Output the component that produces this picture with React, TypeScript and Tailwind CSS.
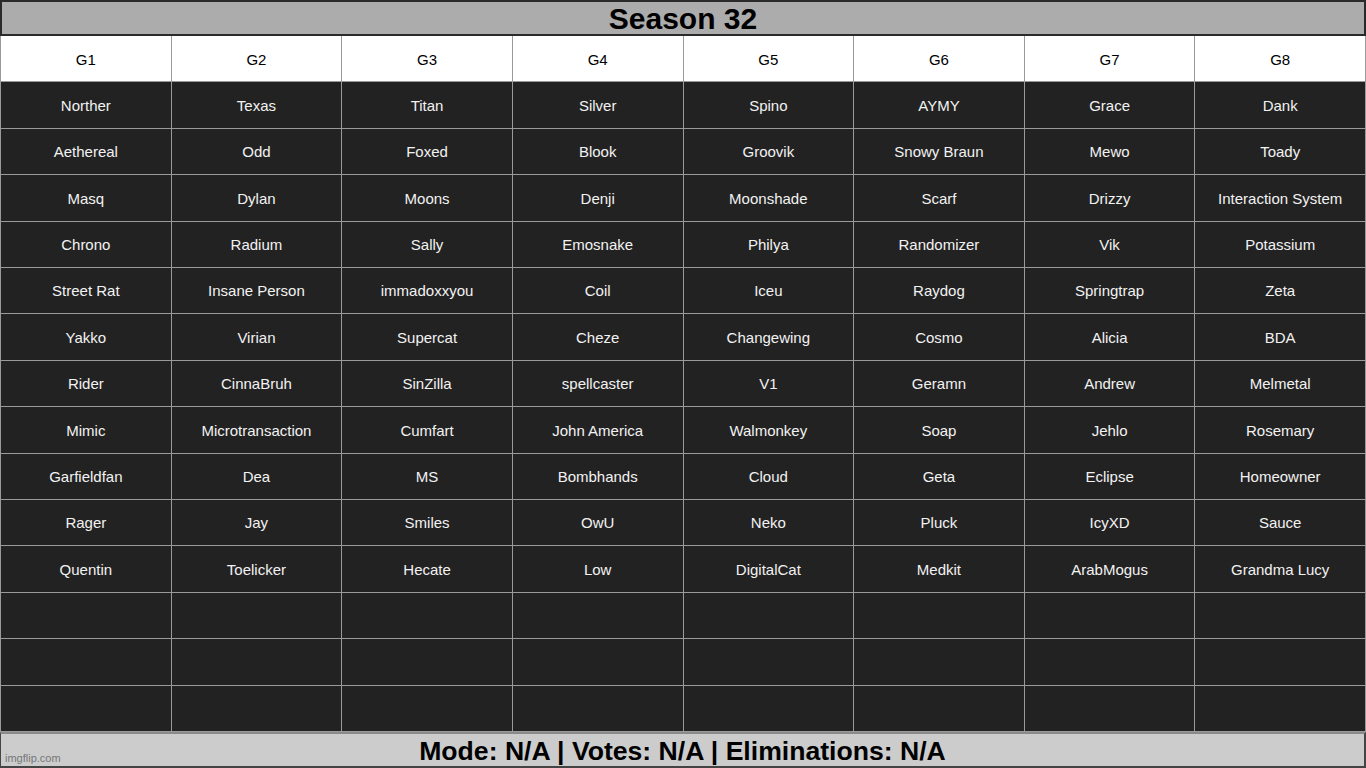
const columns: string[][] = [
  ['Norther', 'Aethereal', 'Masq', 'Chrono', 'Street Rat', 'Yakko', 'Rider', 'Mimic', 'Garfieldfan', 'Rager', 'Quentin'],
  ['Texas', 'Odd', 'Dylan', 'Radium', 'Insane Person', 'Virian', 'CinnaBruh', 'Microtransaction', 'Dea', 'Jay', 'Toelicker'],
  ['Titan', 'Foxed', 'Moons', 'Sally', 'immadoxxyou', 'Supercat', 'SinZilla', 'Cumfart', 'MS', 'Smiles', 'Hecate'],
  ['Silver', 'Blook', 'Denji', 'Emosnake', 'Coil', 'Cheze', 'spellcaster', 'John America', 'Bombhands', 'OwU', 'Low'],
  ['Spino', 'Groovik', 'Moonshade', 'Philya', 'Iceu', 'Changewing', 'V1', 'Walmonkey', 'Cloud', 'Neko', 'DigitalCat'],
  ['AYMY', 'Snowy Braun', 'Scarf', 'Randomizer', 'Raydog', 'Cosmo', 'Geramn', 'Soap', 'Geta', 'Pluck', 'Medkit'],
  ['Grace', 'Mewo', 'Drizzy', 'Vik', 'Springtrap', 'Alicia', 'Andrew', 'Jehlo', 'Eclipse', 'IcyXD', 'ArabMogus'],
  ['Dank', 'Toady', 'Interaction System', 'Potassium', 'Zeta', 'BDA', 'Melmetal', 'Rosemary', 'Homeowner', 'Sauce', 'Grandma Lucy'],
];

const ROWS = 14;

export default function App() {
  const rows: string[][] = [];
  for (let r = 0; r < ROWS; r++) {
    rows.push(columns.map((col) => col[r] ?? ''));
  }

  return (
    <div className="flex h-[768px] w-[1366px] flex-col overflow-hidden bg-[#222] font-['Liberation_Sans',Arial,sans-serif]">
      {/* Title */}
      <div className="flex h-[36px] shrink-0 items-center justify-center border-2 border-[#2a2a2a] bg-[#acacac]">
        <h1 className="pt-px text-[30px] font-bold leading-none text-black">Season 32</h1>
      </div>

      {/* Table */}
      <div className="grid h-[696px] shrink-0 grid-cols-8 grid-rows-15 border-l border-[#9a9a9a]">
        {['G1', 'G2', 'G3', 'G4', 'G5', 'G6', 'G7', 'G8'].map((g) => (
          <div
            key={g}
            className="flex items-center justify-center border-r border-b border-[#9a9a9a] bg-white pt-[3px] text-[15px] text-black"
          >
            {g}
          </div>
        ))}
        {rows.map((row, r) =>
          row.map((name, c) => (
            <div
              key={`${r}-${c}`}
              className="flex items-center justify-center border-r border-b border-[#9a9a9a] bg-[#222] pt-[2px] text-[15px] text-[#f2f2f2]"
            >
              {name}
            </div>
          )),
        )}
      </div>

      {/* Footer */}
      <div className="relative flex h-[36px] shrink-0 items-center justify-center border-t-2 border-r-2 border-b-2 border-l border-t-[#8a8a8a] border-r-[#444] border-b-[#444] border-l-[#444] bg-[#cccccc]">
        <p className="pt-[2px] text-[26.6px] font-bold leading-none text-black">
          Mode: N/A | Votes: N/A | Eliminations: N/A
        </p>
        <span className="absolute bottom-[2px] left-[4px] text-[11px] leading-none text-[#777]">imgflip.com</span>
      </div>
    </div>
  );
}
